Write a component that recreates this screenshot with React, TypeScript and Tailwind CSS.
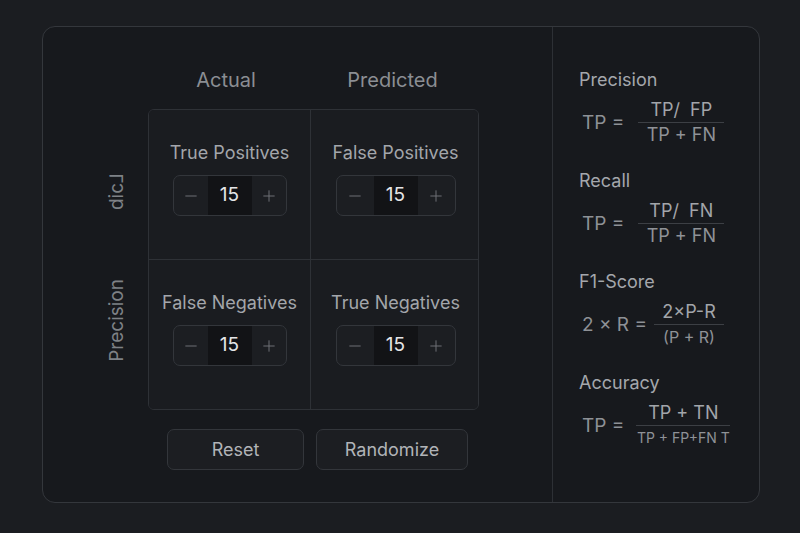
import { useState } from 'react';
import { Minus, Plus } from 'lucide-react';

type CellKey = 'tp' | 'fp' | 'fn' | 'tn';

const font = { fontFamily: 'Inter, "Noto Sans", sans-serif' };

function Stepper({ value, wide, onChange }: { value: number; wide?: boolean; onChange: (v: number) => void }) {
  return (
    <div
      className={`flex h-[41px] items-stretch overflow-hidden rounded-[7px] border border-[#33363b] bg-[#1c1e22] ${
        wide ? 'w-[120px]' : 'w-[114px]'
      }`}
    >
      <button
        onClick={() => onChange(Math.max(0, value - 1))}
        className="flex flex-1 items-center justify-center text-[#6f7277]"
      >
        <Minus size={18} strokeWidth={1.3} />
      </button>
      <div className="flex w-[44px] items-center justify-center bg-[#121316] text-[19px] text-[#e4e5e7]">
        {value}
      </div>
      <button
        onClick={() => onChange(value + 1)}
        className="flex flex-1 items-center justify-center text-[#6f7277]"
      >
        <Plus size={18} strokeWidth={1.3} />
      </button>
    </div>
  );
}

function Cell({
  label,
  value,
  wide,
  className,
  onChange,
}: {
  label: string;
  value: number;
  wide?: boolean;
  className?: string;
  onChange: (v: number) => void;
}) {
  return (
    <div className={`flex flex-col items-center bg-[#1a1c20] pt-[32px] ${className ?? ''}`}>
      <div className="text-[18px] leading-[22px] text-[#a3a6ab]">{label}</div>
      <div className="mt-[11px]">
        <Stepper value={value} wide={wide} onChange={onChange} />
      </div>
    </div>
  );
}

function Fraction({
  top,
  bottom,
  width,
  bottomSize,
}: {
  top: string;
  bottom: string;
  width: string;
  bottomSize: string;
}) {
  return (
    <div className={`flex flex-col items-center ${width}`}>
      <div className="whitespace-pre text-[18px] leading-[20px] text-[#a2a5aa]">{top}</div>
      <div className="my-[2px] h-px w-full bg-[#3c3f44]" />
      <div className={`${bottomSize} leading-[20px] text-[#8f9297]`}>{bottom}</div>
    </div>
  );
}

function Metric({
  title,
  lhs,
  top,
  bottom,
  width,
  gap,
  bottomSize = 'text-[18px]',
}: {
  title: string;
  lhs: string;
  top: string;
  bottom: string;
  width: string;
  gap: string;
  bottomSize?: string;
}) {
  return (
    <div className="flex flex-col">
      <div className="text-[18px] leading-[22px] text-[#a4a7ac]">{title}</div>
      <div className="mt-[9px] flex items-center pl-[3px]">
        <span className={`whitespace-pre text-[19px] leading-[22px] text-[#8e9196] ${gap}`}>{lhs}</span>
        <Fraction top={top} bottom={bottom} width={width} bottomSize={bottomSize} />
      </div>
    </div>
  );
}

export default function App() {
  const [vals, setVals] = useState<Record<CellKey, number>>({ tp: 15, fp: 15, fn: 15, tn: 15 });
  const set = (k: CellKey) => (v: number) => setVals((s) => ({ ...s, [k]: v }));

  return (
    <div className="h-[533px] w-[800px] bg-[#1b1d21] pl-[42px] pt-[26px]" style={font}>
      <div className="flex h-[477px] w-[718px] overflow-hidden rounded-[13px] border border-[#34373c] bg-[#17191d]">
        {/* Matrix side */}
        <div className="flex w-[510px] flex-col border-r border-[#2d3035]">
          <div className="ml-[105px] mt-[41px] grid w-[331px] grid-cols-[162px_169px] text-[20px] leading-[24px] text-[#8b8e93]">
            <div className="pr-[6px] text-center">Actual</div>
            <div className="pr-[4px] text-center">Predicted</div>
          </div>

          <div className="mt-[17px] flex">
            <div className="flex w-[105px] flex-col items-end pr-[21px]">
              <div className="h-[150px] pt-[64px]">
                <span className="block rotate-180 whitespace-nowrap text-[19px] leading-[20px] text-[#7e8186] [writing-mode:vertical-rl]">
                  dic⅃
                </span>
              </div>
              <div className="h-[150px] pt-[20px]">
                <span className="block rotate-180 whitespace-nowrap text-[19px] leading-[20px] text-[#7e8186] [writing-mode:vertical-rl]">
                  Precision
                </span>
              </div>
            </div>

            <div className="flex flex-col">
              <div className="grid w-[331px] grid-cols-[162px_169px] grid-rows-[150px_149px] overflow-hidden rounded-[6px] border border-[#2e3136]">
                <Cell label="True Positives" value={vals.tp} onChange={set('tp')} className="border-b border-r border-[#2e3136]" />
                <Cell label="False Positives" value={vals.fp} wide onChange={set('fp')} className="border-b border-[#2e3136]" />
                <Cell label="False Negatives" value={vals.fn} onChange={set('fn')} className="border-r border-[#2e3136]" />
                <Cell label="True Negatives" value={vals.tn} wide onChange={set('tn')} />
              </div>

              <div className="ml-[19px] mt-[19px] flex gap-[12px]">
                <button
                  onClick={() => setVals({ tp: 15, fp: 15, fn: 15, tn: 15 })}
                  className="h-[41px] w-[137px] rounded-[7px] border border-[#33363b] bg-[#1c1e22] text-[18px] text-[#b1b4b8]"
                >
                  Reset
                </button>
                <button
                  onClick={() =>
                    setVals({
                      tp: Math.floor(Math.random() * 30),
                      fp: Math.floor(Math.random() * 30),
                      fn: Math.floor(Math.random() * 30),
                      tn: Math.floor(Math.random() * 30),
                    })
                  }
                  className="h-[41px] w-[152px] rounded-[7px] border border-[#33363b] bg-[#1c1e22] text-[18px] text-[#b1b4b8]"
                >
                  Randomize
                </button>
              </div>
            </div>
          </div>
        </div>

        {/* Formulas side */}
        <div className="flex flex-1 flex-col gap-[25px] pl-[26px] pt-[42px]">
          <Metric title="Precision" lhs="TP =" top="TP/  FP" bottom="TP + FN" width="w-[86px]" gap="mr-[14px]" />
          <Metric title="Recall" lhs="TP =" top="TP/  FN" bottom="TP + FN" width="w-[86px]" gap="mr-[14px]" />
          <Metric title="F1-Score" lhs="2 × R =" top="2×P-R" bottom="(P + R)" width="w-[70px]" gap="mr-[7px]" bottomSize="text-[16px]" />
          <Metric title="Accuracy" lhs="TP =" top="TP + TN" bottom="TP + FP+FN T" width="w-[94px]" gap="mr-[12px]" bottomSize="text-[14px]" />
        </div>
      </div>
    </div>
  );
}
